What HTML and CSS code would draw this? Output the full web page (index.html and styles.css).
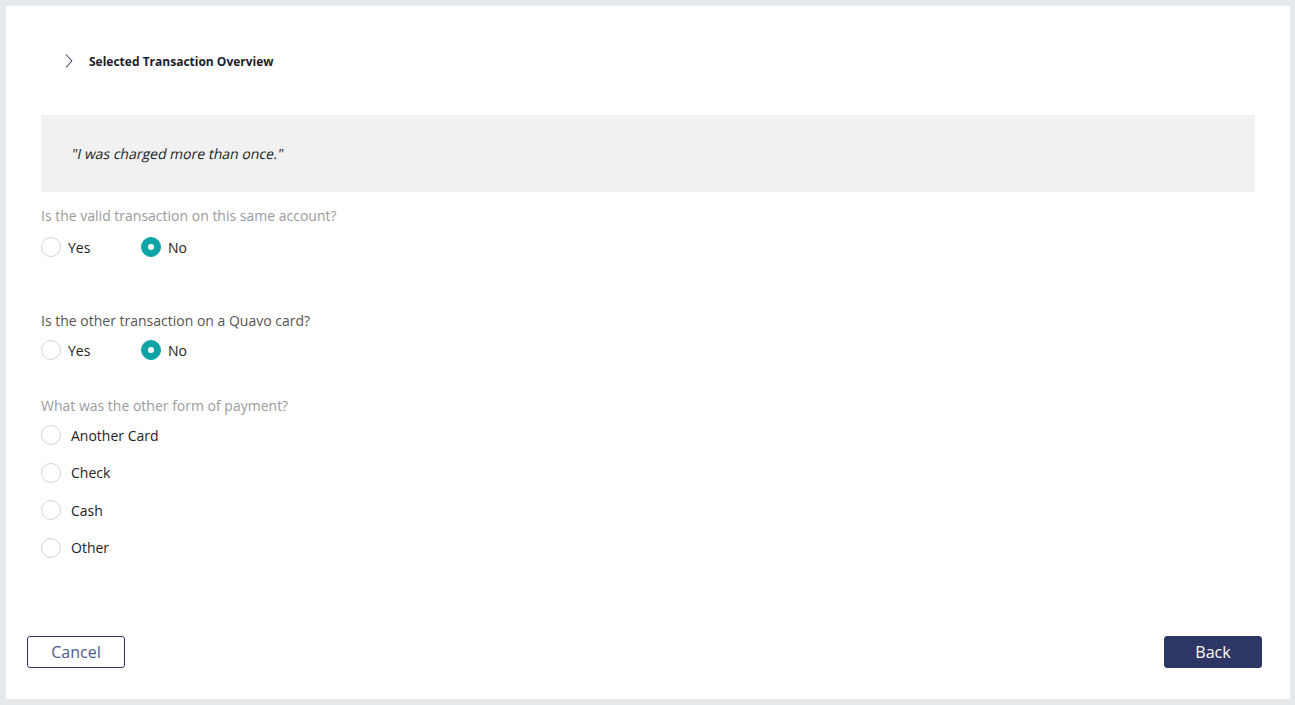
FILE: index.html
```html
<!DOCTYPE html>
<html lang="en">
<head>
<meta charset="utf-8">
<title>Selected Transaction Overview</title>
<link rel="stylesheet" href="styles.css">
</head>
<body>
<main class="panel">
  <header class="overview">
    <svg class="chev" width="8" height="16" viewBox="0 0 8 16" aria-hidden="true"><path d="M1 1.5 L6.8 8 L1 14.5" fill="none" stroke="#4a5068" stroke-width="1.1"/></svg>
    <span class="overview-title">Selected Transaction Overview</span>
  </header>

  <div class="quote"><span class="quote-text">"I was charged more than once."</span></div>

  <section class="q q1">
    <p class="q-label light">Is the valid transaction on this same account?</p>
    <div class="opts inline">
      <label class="opt"><span class="radio"></span><span class="opt-text">Yes</span></label>
      <label class="opt"><span class="radio on"></span><span class="opt-text">No</span></label>
    </div>
  </section>

  <section class="q q2">
    <p class="q-label dark">Is the other transaction on a Quavo card?</p>
    <div class="opts inline">
      <label class="opt"><span class="radio"></span><span class="opt-text">Yes</span></label>
      <label class="opt"><span class="radio on"></span><span class="opt-text">No</span></label>
    </div>
  </section>

  <section class="q q3">
    <p class="q-label light">What was the other form of payment?</p>
    <div class="opts stack">
      <label class="opt"><span class="radio"></span><span class="opt-text">Another Card</span></label>
      <label class="opt"><span class="radio"></span><span class="opt-text">Check</span></label>
      <label class="opt"><span class="radio"></span><span class="opt-text">Cash</span></label>
      <label class="opt"><span class="radio"></span><span class="opt-text">Other</span></label>
    </div>
  </section>

  <footer class="actions">
    <button class="btn btn-outline" type="button">Cancel</button>
    <button class="btn btn-solid" type="button">Back</button>
  </footer>
</main>
</body>
</html>
```
FILE: styles.css
```css
html, body {
  margin: 0;
  padding: 0;
}
body {
  background: #e5e9ec;
  font-family: "Open Sans", "Noto Sans", sans-serif;
  color: #222;
  padding: 6px 5px 6px 6px;
  height: 705px;
  box-sizing: border-box;
}
.panel {
  background: #fff;
  height: 693px;
  display: flex;
  flex-direction: column;
  box-sizing: border-box;
}
.overview {
  display: flex;
  align-items: center;
  height: 22px;
  margin-top: 44px;
  padding-left: 59px;
}
.chev {
  display: block;
}
.overview-title {
  margin-left: 16px;
  font-size: 12px;
  font-weight: 700;
  color: #1b1d2b;
}
.quote {
  margin: 43px 35px 0;
  height: 77px;
  background: #f1f1f1;
  display: flex;
  align-items: center;
  padding-left: 29px;
  font-size: 14px;
  color: #222;
}
.quote-text {
  display: inline-block;
  transform: skewX(-12deg);
  transform-origin: 0 100%;
}
.q {
  margin: 0 35px;
}
.q-label {
  margin: 0;
  font-size: 14px;
  line-height: 20px;
}
.q-label.light { color: #9b9b9b; }
.q-label.dark { color: #555; }
.q1 { margin-top: 14px; }
.q1 .opts { margin-top: 11px; }
.q2 { margin-top: 54px; }
.q2 .opts { margin-top: 9px; }
.q3 { margin-top: 36px; }
.q3 .opts { margin-top: 9px; }
.opts.inline {
  display: flex;
}
.opts.inline .opt {
  width: 100px;
}
.opts.inline .opt-text {
  margin-left: 7px;
}
.opts.stack {
  display: flex;
  flex-direction: column;
  gap: 17.5px;
}
.opts.stack .opt-text {
  margin-left: 10px;
}
.opt {
  display: flex;
  align-items: center;
  height: 20px;
  font-size: 14px;
  color: #222;
}
.radio {
  width: 20px;
  height: 20px;
  border-radius: 50%;
  border: 1px solid #cfd4d9;
  box-sizing: border-box;
  background: #fff;
  flex: none;
  position: relative;
}
.radio.on {
  background: #0da4a8;
  border-color: #0da4a8;
}
.radio.on::after {
  content: "";
  position: absolute;
  left: 50%;
  top: 50%;
  width: 6px;
  height: 6px;
  margin: -3px 0 0 -3px;
  border-radius: 50%;
  background: #fff;
}
.actions {
  margin-top: auto;
  display: flex;
  justify-content: space-between;
  padding: 0 28px 31px 21px;
}
.btn {
  width: 98px;
  height: 32px;
  border-radius: 3px;
  font-family: "Open Sans", "Noto Sans", sans-serif;
  font-size: 16px;
  padding: 0;
  box-sizing: border-box;
  cursor: pointer;
}
.btn-outline {
  background: #fff;
  border: 1px solid #2d3561;
  color: #4c5b8c;
}
.btn-solid {
  background: #2e3666;
  border: 1px solid #2e3666;
  color: #fff;
}
```
